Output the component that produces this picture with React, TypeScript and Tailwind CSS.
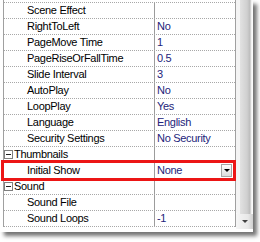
import React from "react";

type Row =
  | { kind: "prop"; name: string; value: string; selected?: boolean }
  | { kind: "cat"; name: string };

const rows: Row[] = [
  { kind: "prop", name: "Scene Effect", value: "" },
  { kind: "prop", name: "RightToLeft", value: "No" },
  { kind: "prop", name: "PageMove Time", value: "1" },
  { kind: "prop", name: "PageRiseOrFallTime", value: "0.5" },
  { kind: "prop", name: "Slide Interval", value: "3" },
  { kind: "prop", name: "AutoPlay", value: "No" },
  { kind: "prop", name: "LoopPlay", value: "Yes" },
  { kind: "prop", name: "Language", value: "English" },
  { kind: "prop", name: "Security Settings", value: "No Security" },
  { kind: "cat", name: "Thumbnails" },
  { kind: "prop", name: "Initial Show", value: "None", selected: true },
  { kind: "cat", name: "Sound" },
  { kind: "prop", name: "Sound File", value: "" },
  { kind: "prop", name: "Sound Loops", value: "-1" },
];

function MinusBox() {
  return (
    <span className="relative ml-0 h-[9px] w-[9px] shrink-0 border border-[#7f7f7f] bg-white">
      <span className="absolute left-[1px] top-[3px] h-[1px] w-[5px] bg-[#202020]" />
    </span>
  );
}

function GridRow({ row }: { row: Row }) {
  if (row.kind === "cat") {
    return (
      <div className="flex h-4 items-center border-b border-dotted border-[#a8a8a8]">
        <div className="flex h-full w-[151px] shrink-0 items-center border-r border-[#9c9c9c]">
          <MinusBox />
          <span className="ml-[1px] text-black">{row.name}</span>
        </div>
      </div>
    );
  }
  return (
    <div className="relative flex h-4 items-center border-b border-dotted border-[#a8a8a8]">
      <div className="flex h-full w-[151px] shrink-0 items-center border-r border-[#9c9c9c] pl-[23px] text-black">
        {row.name}
      </div>
      <div className="flex h-full flex-1 items-center pl-[2px] text-[#23237a]">
        <span className="flex-1">{row.value}</span>
        {row.selected && (
          <span className="mr-[3px] flex h-[13px] w-[11px] items-center justify-center border border-[#a6a6a6] bg-[linear-gradient(#ffffff,#dcdcdc)]">
            <span className="h-0 w-0 border-x-[3px] border-t-[3px] border-x-transparent border-t-black" />
          </span>
        )}
      </div>
      {row.selected && (
        <div className="pointer-events-none absolute -bottom-[3px] -left-[3px] -right-[1px] -top-[3px] border-[3px] border-[#ec1515]" />
      )}
    </div>
  );
}

export default function App() {
  return (
    <div className="h-[242px] w-[260px] bg-white">
      <div
        className="flex h-[232px] w-[253px] bg-white text-[11px] leading-none tracking-[-0.3px] shadow-[4px_4px_4px_rgba(0,0,0,0.55)]"
        style={{ fontFamily: '"Liberation Sans", Arial, sans-serif' }}
      >
        <div className="w-[236px] shrink-0 pl-[3px]">
          <div className="h-[227px] border-x border-[#a0a0a0]">
            <div className="h-[3px] border-b border-dotted border-[#a8a8a8]" />
            {rows.map((r) => (
              <GridRow key={r.name} row={r} />
            ))}
          </div>
        </div>
        <div className="flex h-[229px] w-[17px] flex-col">
          <div className="flex-1 rounded-b-[2px] bg-[linear-gradient(to_right,#f4f4f4_0_4px,#e2e2e2_4px,#d0d0d0_11px,#bcbcbc_14px,#e6e6e6_15px,#fafafa_16px)]" />
          <div className="flex h-[15px] items-center justify-center bg-[linear-gradient(to_right,#f6f6f6,#e8e8e8_70%,#d0d0d0)]">
            <span className="h-0 w-0 border-x-[3px] border-t-[3px] border-x-transparent border-t-[#404040]" />
          </div>
        </div>
      </div>
    </div>
  );
}
